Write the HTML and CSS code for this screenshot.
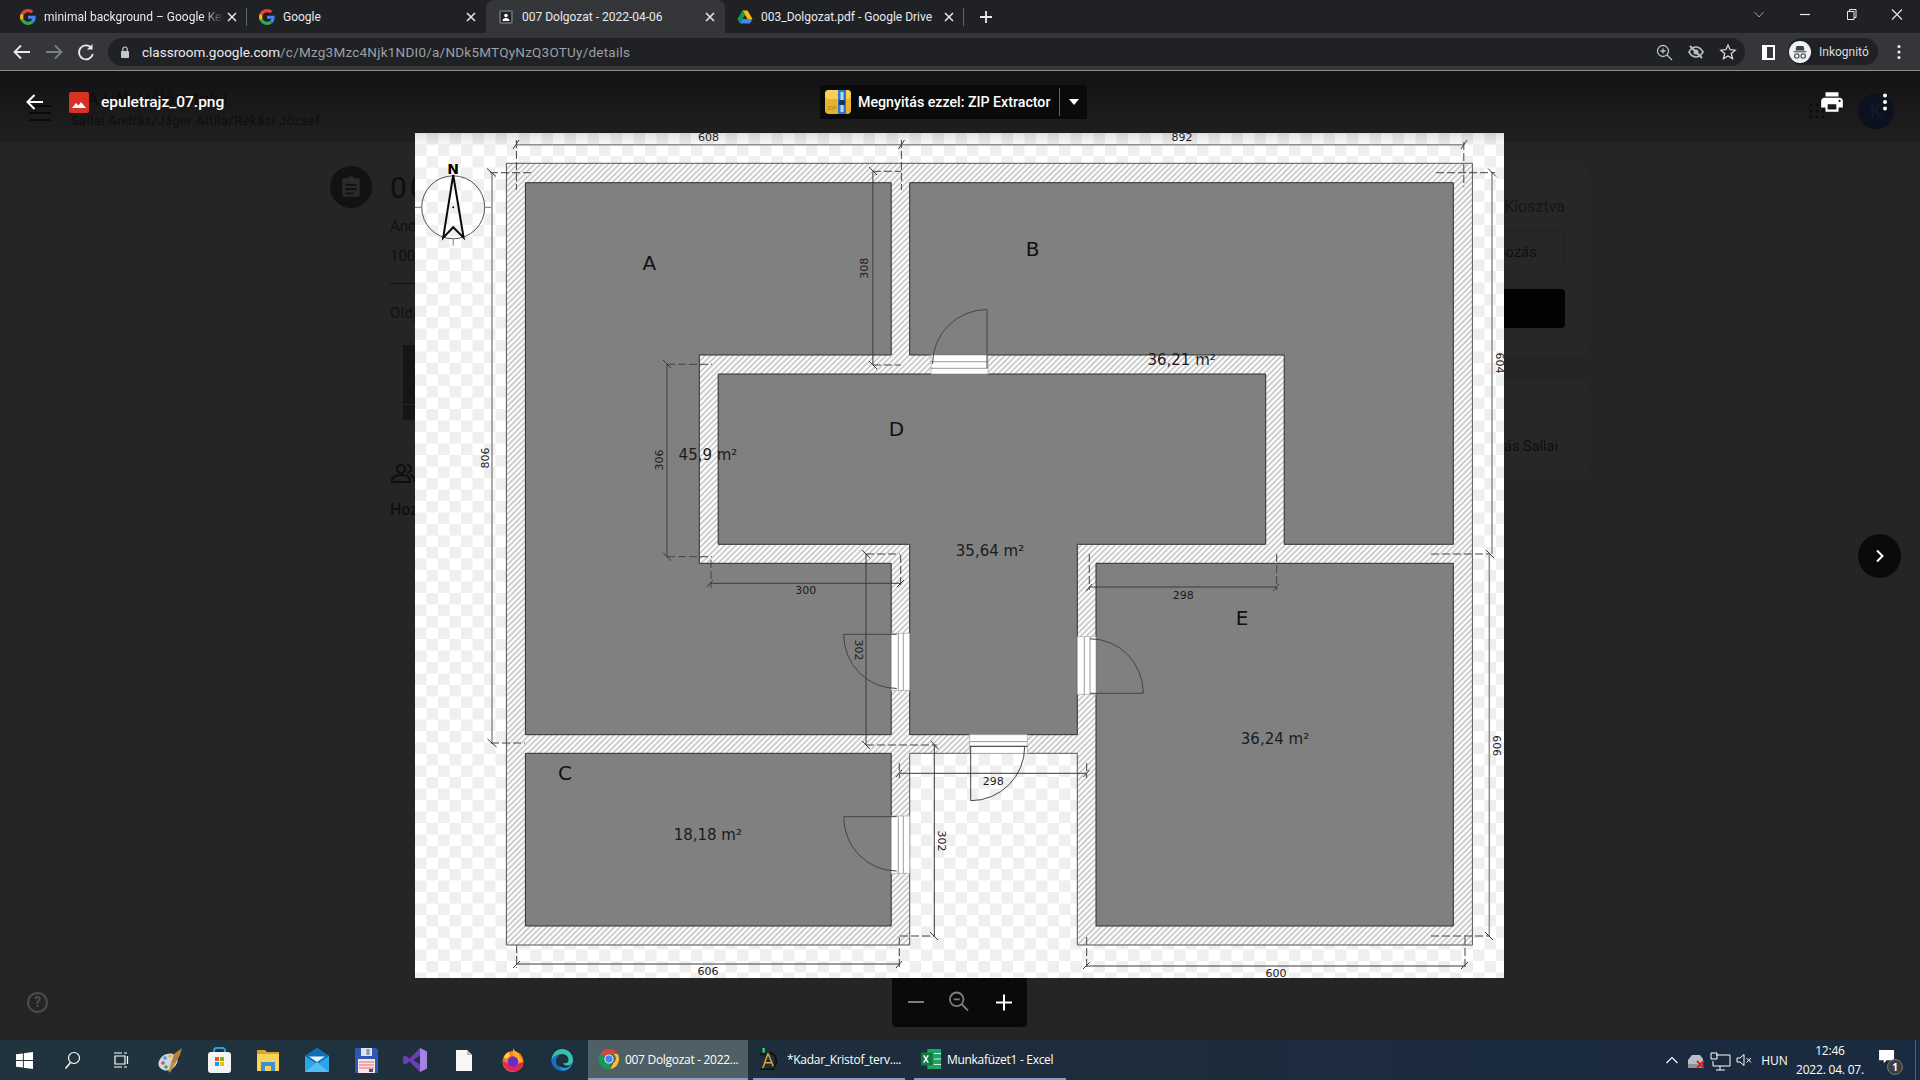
FILE: index.html
```html
<!DOCTYPE html>
<html lang="hu">
<head>
<meta charset="utf-8">
<title>epuletrajz_07.png</title>
<link rel="stylesheet" href="styles.css">
</head>
<body>
<svg class="sprites" aria-hidden="true">
  <symbol id="g-logo" viewBox="0 0 48 48">
    <path fill="#EA4335" d="M24 9.5c3.5 0 6.7 1.2 9.2 3.600l6.900-6.900C35.900 2.400 30.500 0 24 0 14.600 0 6.500 5.400 2.600 13.200l8 6.200C12.500 13.700 17.800 9.500 24 9.500z"/>
    <path fill="#4285F4" d="M47 24.500c0-1.600-.1-3.100-.4-4.500H24v9h12.900c-.6 3-2.200 5.500-4.700 7.200l7.700 6c4.500-4.200 7.100-10.300 7.100-17.700z"/>
    <path fill="#FBBC05" d="M10.600 28.600c-.5-1.400-.8-3-.8-4.600s.3-3.200.8-4.600l-8-6.200C.9 16.500 0 20.100 0 24s.9 7.500 2.600 10.800l8-6.200z"/>
    <path fill="#34A853" d="M24 48c6.500 0 11.900-2.100 15.900-5.800l-7.700-6c-2.100 1.400-4.900 2.300-8.200 2.300-6.200 0-11.500-4.200-13.400-9.900l-8 6.200C6.500 42.600 14.600 48 24 48z"/>
  </symbol>
  <symbol id="chrome-logo" viewBox="0 0 48 48">
    <path fill="#DB4437" d="M24 2a22 22 0 0 1 19 11H24a11 11 0 0 0-10.500 7.500L6.500 10A22 22 0 0 1 24 2z"/>
    <path fill="#FBC02D" d="M43 13a22 22 0 0 1-16.500 32.800L34 32a11 11 0 0 0-1-19z"/>
    <path fill="#0F9D58" d="M6.500 10l9.500 16a11 11 0 0 0 10.500 6.500l-.1 13.300A22 22 0 0 1 6.500 10z"/>
    <circle cx="24" cy="24" r="10" fill="#fff"/>
    <circle cx="24" cy="24" r="8" fill="#4285F4"/>
  </symbol>
  <symbol id="x-mark" viewBox="0 0 16 16">
    <path d="M4 4l8 8M12 4l-8 8" stroke="currentColor" stroke-width="1.500" fill="none"/>
  </symbol>
</svg>

<header class="tabstrip">
  <div class="tab tab-first tab-sep">
    <svg class="favicon"><use href="#g-logo"/></svg>
    <span class="tab-title tab-fade">minimal background – Google Keresés</span>
    <svg class="tab-close"><use href="#x-mark"/></svg>
  </div>
  <div class="tab">
    <svg class="favicon"><use href="#g-logo"/></svg>
    <span class="tab-title">Google</span>
    <svg class="tab-close"><use href="#x-mark"/></svg>
  </div>
  <div class="tab tab-active">
    <svg class="favicon" viewBox="0 0 16 16"><rect x="1" y="1" width="14" height="14" rx="2" fill="#5f6368"/><rect x="3" y="3" width="10" height="10" fill="#202124"/><circle cx="8" cy="6.500" r="1.800" fill="#fff"/><path d="M4.500 12c0-2 1.500-3 3.500-3s3.500 1 3.500 3z" fill="#fff"/></svg>
    <span class="tab-title">007 Dolgozat - 2022-04-06</span>
    <svg class="tab-close"><use href="#x-mark"/></svg>
  </div>
  <div class="tab tab-sep">
    <svg class="favicon" viewBox="0 0 16 16"><path d="M5.500 1.500h5L15.500 10h-5z" fill="#FBBC04"/><path d="M5.500 1.500L.5 10 3 14.500 8 6z" fill="#0F9D58"/><path d="M3 14.500h10L15.500 10h-10z" fill="#4285F4"/></svg>
    <span class="tab-title">003_Dolgozat.pdf - Google Drive</span>
    <svg class="tab-close"><use href="#x-mark"/></svg>
  </div>
  <svg class="newtab" viewBox="0 0 28 28"><path d="M14 8v12M8 14h12" stroke="#e8eaed" stroke-width="1.800"/></svg>
  <div class="window-controls">
    <svg class="winbtn" viewBox="0 0 46 28"><path d="M18.500 12l4.500 5 4.500-5" stroke="#9aa0a6" fill="none"/></svg>
    <svg class="winbtn" viewBox="0 0 46 28"><path d="M18 14.500h10" stroke="#e8eaed" stroke-width="1.200"/></svg>
    <svg class="winbtn" viewBox="0 0 46 28"><path d="M19.500 11.500h6.500v8h-6.500zM21.500 11.500v-2h6.500v8h-2" stroke="#e8eaed" fill="none"/></svg>
    <svg class="winbtn" viewBox="0 0 46 28"><path d="M18 9.500l10 10M28 9.500l-10 10" stroke="#e8eaed" stroke-width="1.100"/></svg>
  </div>
</header>

<nav class="toolbar">
  <svg class="tool" viewBox="0 0 32 32"><path d="M24 16H9M15 9.500L8.500 16l6.500 6.500" stroke="#e8eaed" stroke-width="1.800" fill="none"/></svg>
  <svg class="tool" viewBox="0 0 32 32"><path d="M8 16h15M17 9.500l6.500 6.500-6.500 6.500" stroke="#7c7f84" stroke-width="1.800" fill="none"/></svg>
  <svg class="tool" viewBox="0 0 32 32"><path d="M21 11.500a7 7 0 1 0 1.800 6.500" stroke="#e8eaed" stroke-width="1.800" fill="none"/><path d="M22.500 8v5.500H17z" fill="#e8eaed"/></svg>
  <div class="omnibox">
    <svg class="lock" viewBox="0 0 14 14"><rect x="3" y="6" width="8" height="7" rx="1" fill="#c4c7ca"/><path d="M4.800 6V4.200a2.200 2.200 0 0 1 4.400 0V6" stroke="#c4c7ca" stroke-width="1.200" fill="none"/></svg>
    <div class="url"><span class="url-host">classroom.google.com</span>/c/Mzg3Mzc4Njk1NDI0/a/NDk5MTQyNzQ3OTUy/details</div>
    <svg class="tool" viewBox="0 0 32 32"><circle cx="15" cy="15" r="5.500" stroke="#bdc1c6" stroke-width="1.300" fill="none"/><path d="M19 19l5 5M15 12.500v5M12.500 15h5" stroke="#bdc1c6" stroke-width="1.300"/></svg>
    <svg class="tool" viewBox="0 0 32 32"><path d="M9 16s3-5 7-5 7 5 7 5-3 5-7 5-7-5-7-5z" stroke="#bdc1c6" stroke-width="1.600" fill="none"/><circle cx="16" cy="16" r="2.500" fill="#bdc1c6"/><path d="M10 10l12 12" stroke="#bdc1c6" stroke-width="1.800"/></svg>
    <svg class="tool" viewBox="0 0 32 32"><path d="M16 9l2.100 4.700 5.100.5-3.900 3.400 1.200 5L16 20l-4.500 2.600 1.200-5-3.900-3.400 5.100-.5z" stroke="#d5d7da" stroke-width="1.300" fill="none"/></svg>
  </div>
  <svg class="tool tool-split" viewBox="0 0 32 32"><rect x="11" y="10" width="11" height="13" fill="none" stroke="#fff" stroke-width="2"/><rect x="11" y="10" width="4" height="13" fill="#fff"/></svg>
  <div class="profile-pill">
    <svg class="incognito" viewBox="0 0 22 22"><circle cx="11" cy="11" r="11" fill="#f1f3f4"/><path d="M7.500 5h7l1 4.500h-9zM4.500 10.200h13v1h-13z" fill="#3c4043"/><circle cx="7.800" cy="15" r="2.200" fill="none" stroke="#3c4043" stroke-width="1.100"/><circle cx="14.200" cy="15" r="2.200" fill="none" stroke="#3c4043" stroke-width="1.100"/></svg>
    <span class="profile-name">Inkognitó</span>
  </div>
  <svg class="tool tool-menu" viewBox="0 0 32 32"><circle cx="16" cy="10.500" r="1.600" fill="#e8eaed"/><circle cx="16" cy="16" r="1.600" fill="#e8eaed"/><circle cx="16" cy="21.500" r="1.600" fill="#e8eaed"/></svg>
</nav>

<main class="viewer">
  <div class="classroom">
    <div class="class-head">
      <div class="burger"><i></i><i></i><i></i></div>
      <div class="class-names">
        <div class="class-title">IRA I/N. Hálózatok I.</div>
        <div class="class-sub">Sallai András/Jáger Attila/Rékási József</div>
      </div>
      <svg class="apps-grid" viewBox="0 0 18 18"><g fill="#0b0b0b"><circle cx="3" cy="3" r="1.600"/><circle cx="9" cy="3" r="1.600"/><circle cx="15" cy="3" r="1.600"/><circle cx="3" cy="9" r="1.600"/><circle cx="9" cy="9" r="1.600"/><circle cx="15" cy="9" r="1.600"/><circle cx="3" cy="15" r="1.600"/><circle cx="9" cy="15" r="1.600"/><circle cx="15" cy="15" r="1.600"/></g></svg>
      <div class="avatar">K</div>
    </div>
    <div class="class-main">
      <div class="assign-icon">
        <svg viewBox="0 0 24 24" width="26" height="26"><path d="M5 4h4.200a3 3 0 0 1 5.600 0H19a1 1 0 0 1 1 1v15a1 1 0 0 1-1 1H5a1 1 0 0 1-1-1V5a1 1 0 0 1 1-1zm2 5v2h10V9zm0 4v2h10v-2zm0 4v2h7v-2z" fill="#2a2b2c"/></svg>
      </div>
      <div class="assign-body">
        <div class="assign-title">007 Dolgozat - 2022-04-06</div>
        <div class="assign-meta">András Sallai • ápr. 6.</div>
        <div class="assign-points">100 pont</div>
        <div class="assign-desc">Oldja meg a feladatot</div>
        <div class="assign-thumb"><div class="thumb-top"></div><div class="thumb-bottom"></div></div>
        <div class="assign-comments">
          <svg viewBox="0 0 24 20" width="26" height="20"><circle cx="10" cy="6" r="4" fill="none" stroke="#0e0e0e" stroke-width="2"/><path d="M1 19v-2c0-3 4-5 9-5s9 2 9 5v2zM16 2a4 4 0 0 1 0 8M19 12c3 1 5 3 5 7" fill="none" stroke="#0e0e0e" stroke-width="2"/></svg>
        </div>
        <div class="assign-add">Hozzászólás</div>
      </div>
      <aside class="assign-side">
        <section class="side-card side-work">
          <div class="status">Kiosztva</div>
          <div class="btn-outline">Létrehozás</div>
          <div class="btn-solid"></div>
        </section>
        <section class="side-card side-private">
          <div class="private-name">András Sallai</div>
        </section>
      </aside>
    </div>
  </div>

  <div class="lightbox">
    <div class="lb-head">
      <div class="lb-file">
        <svg class="lb-back" viewBox="0 0 24 24"><path d="M20 12H5M11.500 5L4.500 12l7 7" stroke="#fff" stroke-width="2" fill="none"/></svg>
        <svg class="lb-fileicon" viewBox="0 0 20 21"><rect width="20" height="21" rx="2" fill="#d93025"/><path d="M3 16l4-5 2.500 2.500L12 10l5 6z" fill="#fff"/></svg>
        <span class="lb-name">epuletrajz_07.png</span>
      </div>
      <div class="lb-open">
        <svg class="zip-icon" viewBox="0 0 26 24"><rect x="0" y="0" width="26" height="24" rx="4" fill="#e9b22e"/><rect x="0" y="0" width="26" height="9" rx="4" fill="#f6cf55"/><rect x="13" y="0" width="8" height="24" fill="#2f78c8"/><rect x="15.500" y="2" width="3" height="20" fill="#bcd6f0"/><rect x="14" y="10" width="6" height="5" rx="1" fill="#16365a"/><text class="zip-label" x="7" y="20">ZIP</text></svg>
        <span class="lb-open-text">Megnyitás ezzel: ZIP Extractor</span>
        <span class="lb-open-sep"></span>
        <span class="lb-open-arrow"></span>
      </div>
      <div class="lb-actions">
        <svg class="lb-print" viewBox="0 0 24 24"><path fill="#fff" d="M19 8H5c-1.660 0-3 1.340-3 3v6h4v4h12v-4h4v-6c0-1.660-1.340-3-3-3zm-3 11H8v-5h8v5zm3-7c-.55 0-1-.45-1-1s.45-1 1-1 1 .45 1 1-.45 1-1 1zm-1-9H6v4h12V3z"/></svg>
        <svg class="lb-more" viewBox="0 0 6 18"><circle cx="3" cy="2.500" r="2" fill="#fff"/><circle cx="3" cy="9" r="2" fill="#fff"/><circle cx="3" cy="15.500" r="2" fill="#fff"/></svg>
      </div>
    </div>

    <svg class="plan" viewBox="415 133 1089 845" width="1089" height="845">
      <defs>
        <pattern id="checker" x="415" y="133" width="23" height="23" patternUnits="userSpaceOnUse">
          <rect width="23" height="23" fill="#fff"/>
          <rect x="11.500" width="11.500" height="11.500" fill="#efefef"/>
          <rect y="11.500" width="11.500" height="11.500" fill="#efefef"/>
        </pattern>
        <pattern id="hatch" width="4" height="4" patternUnits="userSpaceOnUse" patternTransform="rotate(45)">
          <rect width="4" height="4" fill="#fff"/>
          <path d="M2 0v4" stroke="#6e6e6e" stroke-width=".7"/>
        </pattern>
        <linearGradient id="topfade" x1="0" y1="0" x2="0" y2="1">
          <stop offset="0" stop-color="#000" stop-opacity=".12"/>
          <stop offset="1" stop-color="#000" stop-opacity="0"/>
        </linearGradient>
      </defs>
      <rect x="415" y="133" width="1089" height="845" fill="url(#checker)"/>
      <rect x="415" y="133" width="1089" height="14" fill="url(#topfade)"/>

      <path class="wall" d="M506.400 163.300H1472.400V945H1077.300V753.300H909.700V945H506.400Z"/>
      <g class="room">
        <path d="M525.400 182.700H891.200V355H699.300V563.300H891.200V734.700H525.400Z"/>
        <path d="M909.700 182.700H1453.300V544.300H1284.200V355H909.700Z"/>
        <path d="M718.200 374H1265.700V544.300H1077.300V734.700H909.700V544.300H718.200Z"/>
        <path d="M525.400 753.300H891.200V926H525.400Z"/>
        <path d="M1096 563.300H1453.300V926H1096Z"/>
      </g>

      <g class="door-frame">
        <rect x="931" y="355" width="57" height="19"/>
        <rect x="891.200" y="633.300" width="18.500" height="57"/>
        <rect x="1077.300" y="636.700" width="18.700" height="57.600"/>
        <rect x="969.700" y="734.700" width="57.600" height="18.600"/>
        <rect x="891.200" y="816" width="18.500" height="57.300"/>
      </g>
      <path class="door-line" d="M931 361.700H988M931 368.300H988M898.300 633.300V690.300M903.300 633.300V690.300M1084.300 636.700V694.300M1090 636.700V694.300M969.700 741.600H1027.300M898.300 816V873.300M903.300 816V873.300"/>
      <path class="door-line door-dark" d="M969.700 746.300H1027.300"/>
      <g class="swing">
        <path d="M987 368V309.500A54.500 54.500 0 0 0 932.500 364"/>
        <path d="M896.700 634.300H843.700A53 54 0 0 0 896.700 688.500"/>
        <path d="M896.700 816.700H843.700A53 54 0 0 0 896.700 871"/>
        <path d="M1090 693.300H1143.300A53 54.500 0 0 0 1090 638.800"/>
        <path d="M970.700 746.700V800.700A54 54 0 0 0 1024.700 746.700"/>
      </g>

      <path class="ext" d="M516.400 140V190M901.400 140V190M1463.800 142V187M490 172.700H532M491 743H525M1436 172.700H1495M1431 554H1490M1431 936H1490M516.700 945V968M899.300 937V968M1086.700 937V970M1465 937V970M872.900 171.300H901M872.900 365H901M667 364.300H712M667 556.700H712M711 560V588M900.700 555V586M866 554H900M866 745H936.700M900 936H934.300M899.300 763V778M1086.700 763V778M1089.300 554V590M1276.700 554V590"/>
      <path class="dim-line dim-soft" d="M516.400 144.700H1463.800M492 172.700V743M1492 172.700V554M1489.300 554V936"/>
      <path class="dim-line" d="M516.700 964H899.300M1086.700 966H1465M872.900 171.300V365M667 364.300V556.700M710 583.300H901M866 554V745M934.300 745V936M899.300 773.300H1086.700M1089.300 587H1276.700"/>
      <path class="dim-line" d="M513 149l6-9M898.500 149l6-9M1461 149l6-9M487 168.500l9 8M487.500 739l9 8M1488 168.500l8 8M1486 550l8 8M1485 932l8 8M513 968l7-7M896 968l6-7M1083 969l7-7M1461 969l7-7M869 167l8 8M869 361l8 8M663 360l8 8M663 552.700l8 8M707 587l6-7M897 587l7-7M862 550l8 8M862 741l8 8M931 741l7 8M930 932l8 8M896 777l6-7M1083.500 777l6-7M1086 591l6-7M1273 591l6-7"/>

      <g class="compass">
        <circle cx="453.200" cy="207.300" r="31.500"/>
        <path d="M415 207.300H421.700M484.700 207.300H491.400M453.200 238.800V245.700"/>
      </g>
      <path class="north" d="M453.200 175L443.200 237.700L453.200 227.300L463.600 237.700Z"/>
      <circle class="north-dot" cx="453.200" cy="207.300" r="1"/>
      <text class="t-north" x="453.200" y="169">N</text>

      <text class="t-dim" x="708.600" y="137.500">608</text>
      <text class="t-dim" x="1182" y="137.500">892</text>
      <text class="t-dim" x="708" y="971">606</text>
      <text class="t-dim" x="1276" y="973">600</text>
      <text class="t-dim" x="805.700" y="590.500">300</text>
      <text class="t-dim" x="993.300" y="781">298</text>
      <text class="t-dim" x="1183.300" y="595">298</text>
      <text class="t-dim" transform="rotate(-90 485 458)" x="485" y="458">806</text>
      <text class="t-dim" transform="rotate(-90 864.300 268.300)" x="864.300" y="268.300">308</text>
      <text class="t-dim" transform="rotate(-90 659 460)" x="659" y="460">306</text>
      <text class="t-dim" transform="rotate(90 1499 363)" x="1499" y="363">604</text>
      <text class="t-dim" transform="rotate(90 1496.700 745.700)" x="1496.700" y="745.700">606</text>
      <text class="t-dim" transform="rotate(90 858.500 650)" x="858.500" y="650">302</text>
      <text class="t-dim" transform="rotate(90 941.700 841)" x="941.700" y="841">302</text>

      <text class="t-room" x="649.300" y="262.700">A</text>
      <text class="t-room" x="1032.500" y="248.600">B</text>
      <text class="t-room" x="565" y="772.600">C</text>
      <text class="t-room" x="896.400" y="429">D</text>
      <text class="t-room" x="1242" y="618.300">E</text>
      <text class="t-area" x="708" y="455.300">45,9 m²</text>
      <text class="t-area" x="1181.600" y="359.800">36,21 m²</text>
      <text class="t-area" x="990" y="551">35,64 m²</text>
      <text class="t-area" x="1275" y="739">36,24 m²</text>
      <text class="t-area" x="707.800" y="835">18,18 m²</text>
    </svg>

    <div class="zoombar">
      <svg class="zb" viewBox="0 0 48 49"><path d="M16 24h16" stroke="#7d7d7d" stroke-width="2"/></svg>
      <svg class="zb" viewBox="0 0 34 49"><circle cx="16.700" cy="21.300" r="6.800" stroke="#7d7d7d" stroke-width="1.800" fill="none"/><path d="M13.700 21.300h6M21.500 26l6.500 6.700" stroke="#7d7d7d" stroke-width="1.800"/></svg>
      <svg class="zb zb-plus" viewBox="0 0 46 49"><path d="M23 16.500v16M15 24.500h16" stroke="#fff" stroke-width="2"/></svg>
    </div>

    <div class="lb-next">
      <svg viewBox="0 0 14 14" width="14" height="14"><path d="M4 1.500l5.500 5.500L4 12.500" stroke="#fff" stroke-width="2" fill="none"/></svg>
    </div>
    <div class="lb-help">?</div>
  </div>
</main>

<footer class="taskbar">
  <div class="tb-icon tb-sys"><svg viewBox="0 0 18 18" width="17" height="17"><path fill="#fff" d="M0 2.500l7.300-1v7H0zM8.300 1.300L18 0v8.500H8.300zM0 9.500h7.300v7l-7.300-1zM8.300 9.500H18V18l-9.700-1.300z"/></svg></div>
  <div class="tb-icon tb-sys"><svg viewBox="0 0 20 20" width="20" height="20"><circle cx="12" cy="8" r="5.500" fill="none" stroke="#fff" stroke-width="1.200"/><path d="M8.500 12.500L3.500 18.500" stroke="#fff" stroke-width="1.400"/></svg></div>
  <div class="tb-icon tb-view"><svg viewBox="0 0 20 20" width="20" height="20"><path d="M4 6h10v8H4z" fill="none" stroke="#fff" stroke-width="1.200"/><path d="M3 3h8M13 3h3M3 17h8M13 17h3M16.500 6v8" stroke="#fff" stroke-width="1.200"/></svg></div>
  <div class="tb-icon"><svg viewBox="0 0 26 26" width="26" height="26"><ellipse cx="11" cy="15" rx="10" ry="8" transform="rotate(-30 11 15)" fill="#cfd8e0"/><circle cx="6" cy="16" r="1.800" fill="#d8504a"/><circle cx="8" cy="11" r="1.800" fill="#3c9be0"/><circle cx="13" cy="9" r="1.800" fill="#e8b930"/><circle cx="9" cy="20" r="1.800" fill="#3aa55c"/><path d="M14 16L11.500 25l1.500.5L18 17z" fill="#c98a3c"/><path d="M25 1l-8 6-3 9 4 1 5-9z" fill="#b97f3a"/></svg></div>
  <div class="tb-icon"><svg viewBox="0 0 23 26" width="23" height="26"><path d="M6 8V3.500A2.500 2.500 0 0 1 8.500 1h6A2.500 2.500 0 0 1 17 3.500V8" fill="none" stroke="#2b9fe8" stroke-width="2"/><rect x="0" y="5" width="23" height="21" rx="3" fill="#f4f4f4"/><rect x="7" y="10" width="4" height="4" fill="#f25022"/><rect x="12" y="10" width="4" height="4" fill="#7fba00"/><rect x="7" y="15" width="4" height="4" fill="#00a4ef"/><rect x="12" y="15" width="4" height="4" fill="#ffb900"/></svg></div>
  <div class="tb-icon"><svg viewBox="0 0 22 21" width="22" height="21"><path d="M0 0h8l2 2h12v19H0z" fill="#d9a32a"/><path d="M0 4h22v17H0z" fill="#f7d358"/><path d="M4 12h14v9h-4v-5H8v5H4z" fill="#3f8fd6"/></svg></div>
  <div class="tb-icon"><svg viewBox="0 0 24 24" width="24" height="24"><path d="M12 0L24 8v16H0V8z" fill="#2aa5ea"/><path d="M12 0L24 8l-12 8L0 8z" fill="#0d6fb8"/><path d="M4 8.500h16L12 14z" fill="#eef7fd"/><path d="M0 24l12-10 12 10z" fill="#56bdf3"/></svg></div>
  <div class="tb-icon"><svg viewBox="0 0 23 25" width="23" height="25"><path d="M0 0h21l2 2v23H0z" fill="#2f57b8"/><rect x="6" y="0" width="11" height="8" fill="#dfe3ea"/><rect x="11.500" y="1" width="3" height="6" fill="#8a93a3"/><rect x="3" y="11" width="17" height="14" fill="#f9e4e4"/><path d="M4 14h15M4 17h15M4 20h15" stroke="#e46a72" stroke-width="1.200"/><rect x="14" y="21" width="4" height="3" fill="#555"/></svg></div>
  <div class="tb-icon"><svg viewBox="0 0 24 24" width="24" height="24"><path d="M17 0l7 3.500v17L17 24z" fill="#a583e0"/><path d="M17 0L6.500 10.500 2.500 7.500 0 8.700v6.600l2.500 1.200 4-3L17 24v-7.500L10.500 12 17 7.500z" fill="#6a3db5"/></svg></div>
  <div class="tb-icon"><svg viewBox="0 0 16 21" width="16" height="21"><path d="M0 0h11l5 5v16H0z" fill="#f7f7f7"/><path d="M11 0l5 5h-5z" fill="#bdbdbd"/></svg></div>
  <div class="tb-icon"><svg viewBox="0 0 24 24" width="24" height="24"><circle cx="12" cy="13.500" r="10.500" fill="#ff7a1a"/><path d="M12 0c1 3 4 4 6 7s4 6 4 7H12z" fill="#ffb01f"/><path d="M2 13c0 5 4 10.500 10 10.500S22 19 22 14L12 18z" fill="#e0245e"/><circle cx="12" cy="13.500" r="5.200" fill="#6a2cc9"/><path d="M3 9c1.500-3 3-4 5-5l1 4-4 3z" fill="#ffd23f"/></svg></div>
  <div class="tb-icon"><svg viewBox="0 0 24 24" width="24" height="24"><path d="M12 1a11 11 0 0 1 11 12c0 3-3 4.500-5.500 4.500-3 0-4.500-1.500-4.500-2.500 3 1 5.500-.5 5.500-3C18.500 8 15 6 12 6c-4.500 0-8 3-10.500 7A11 11 0 0 1 12 1z" fill="#35c1b0"/><path d="M1.500 13C2 9 6 6.500 9.500 7.500 6 9 5 13 7 17c1.500 3 4.500 5 8.500 5.500A11 11 0 0 1 1.500 13z" fill="#1a6fc4"/><path d="M15 22.500c-2.500.5-5.500-2-6.500-5 2.500 2.500 7 3 10 1.500 1.800-1 3.500-3 4-5-.5 4.500-3.500 7.500-7.500 8.500z" fill="#2a98dc"/></svg></div>
  <div class="task task-active">
    <svg class="task-logo"><use href="#chrome-logo"/></svg>
    <span class="task-text">007 Dolgozat - 2022...</span>
  </div>
  <div class="task task-cad">
    <svg class="task-logo" viewBox="0 0 24 26"><rect x="6" y="1" width="2.500" height="5" fill="#2de04a"/><path d="M12 7L6 24M12 7l7 17M9 17h7" stroke="#d9a441" stroke-width="1.600" fill="none"/><path d="M3 8h7M3 24h17" stroke="#111" stroke-width="2"/><path d="M14 6a9 9 0 0 1 7 9 9 9 0 0 1-4 8" stroke="#0d0d0d" stroke-width="2" fill="none"/></svg>
    <span class="task-text">*Kadar_Kristof_terv....</span>
  </div>
  <div class="task task-xl">
    <svg class="task-logo" viewBox="0 0 24 24"><rect x="8" y="1" width="15" height="22" rx="1" fill="#21a366"/><path d="M15 6h8M15 12h8M15 18h8" stroke="#e7f6ee"/><rect x="1" y="5" width="13" height="14" rx="1" fill="#107c41"/><path d="M4 8l5 8M9 8l-5 8" stroke="#fff" stroke-width="1.600"/></svg>
    <span class="task-text">Munkafüzet1 - Excel</span>
  </div>

  <div class="tray">
    <svg class="tray-ico" viewBox="0 0 24 40"><path d="M6.500 23l5.500-5.500 5.500 5.500" stroke="#fff" stroke-width="1.100" fill="none"/></svg>
    <svg class="tray-ico" viewBox="0 0 24 40"><path d="M4 20l4-5h8l3 4v7H4z" fill="#b9bcc0"/><rect x="4" y="24" width="15" height="4" fill="#8f9398"/><path d="M13 21l7 7M20 21l-7 7" stroke="#e8161c" stroke-width="2"/></svg>
    <svg class="tray-ico" viewBox="0 0 24 40"><path d="M8 15h14v11H5v-5M12 26v4M8 30h9M3 13h6v6H3z" stroke="#fff" fill="none"/></svg>
    <svg class="tray-ico" viewBox="0 0 24 40"><path d="M5 18h3l4-3.500v11L8 22H5z" stroke="#fff" fill="none"/><path d="M14.500 18l4.500 4.500M19 18l-4.500 4.500" stroke="#fff"/></svg>
    <div class="tray-lang">HUN</div>
    <div class="tray-clock"><div>12:46</div><div>2022. 04. 07.</div></div>
    <div class="tray-notif">
      <svg viewBox="0 0 18 16" width="17" height="15"><path d="M0 0h16v11H8l-3 3v-3H0z" fill="#fff"/></svg>
      <span class="notif-badge">1</span>
    </div>
    <div class="show-desktop"></div>
  </div>
</footer>
</body>
</html>
```

FILE: styles.css
```css
* { box-sizing: border-box; }
html, body { height: 100%; }
body {
  margin: 0;
  width: 1920px;
  height: 1080px;
  overflow: hidden;
  display: flex;
  flex-direction: column;
  background: #252525;
  font-family: Roboto, "Noto Sans", sans-serif;
  color: #e8eaed;
}
.sprites { position: absolute; width: 0; height: 0; }

/* Browser tab strip */
.tabstrip {
  flex: 0 0 33px;
  display: flex;
  align-items: stretch;
  background: #202124;
}
.tab {
  flex: 0 0 239px;
  min-width: 0;
  display: flex;
  align-items: center;
  padding: 0 7px 0 12px;
  font-size: 12px;
  position: relative;
}
.tab-first { margin-left: 8px; }
.tab-active { background: #35363a; border-radius: 8px 8px 0 0; }
.tab-sep::after {
  content: "";
  position: absolute;
  right: 0;
  top: 8px;
  bottom: 7px;
  width: 1px;
  background: #5f6368;
}
.favicon { flex: 0 0 16px; width: 16px; height: 16px; margin-right: 8px; }
.tab-title { flex: 1; min-width: 0; white-space: nowrap; overflow: hidden; }
.tab-fade { -webkit-mask-image: linear-gradient(90deg, #000 88%, transparent); mask-image: linear-gradient(90deg, #000 88%, transparent); }
.tab-close { flex: 0 0 16px; width: 16px; height: 16px; color: #e8eaed; }
.newtab { flex: 0 0 28px; width: 28px; height: 28px; margin: 3px 0 0 8px; }
.window-controls { margin-left: auto; display: flex; }
.winbtn { width: 46px; height: 28px; }

/* Browser toolbar */
.toolbar {
  flex: 0 0 38px;
  display: flex;
  align-items: center;
  padding: 0 5px 0 6px;
  background: #35363a;
  border-bottom: 1px solid #8c8d90;
}
.tool { flex: 0 0 32px; width: 32px; height: 32px; }
.omnibox {
  flex: 0 0 1637px;
  height: 28px;
  margin-left: 6px;
  padding: 0 1px 0 10px;
  display: flex;
  align-items: center;
  background: #202124;
  border-radius: 14px;
}
.lock { flex: 0 0 14px; width: 14px; height: 14px; }
.url { flex: 1; margin-left: 10px; font-size: 13.500px; letter-spacing: .23px; color: #9aa0a6; white-space: nowrap; }
.url-host { color: #e8eaed; letter-spacing: 0; }
.tool-split { margin-left: 7px; }
.profile-pill {
  flex: 0 0 90px;
  height: 27px;
  margin-left: 4px;
  display: flex;
  align-items: center;
  background: #202124;
  border-radius: 14px;
}
.incognito { width: 22px; height: 22px; margin-left: 1px; }
.profile-name { margin-left: 8px; font-size: 12px; color: #dadce0; }
.tool-menu { margin-left: 5px; }

/* Page under the lightbox */
.viewer { flex: 1; position: relative; overflow: hidden; background: #252525; }
.classroom { height: 100%; display: flex; flex-direction: column; }
.class-head {
  flex: 0 0 71px;
  display: flex;
  align-items: center;
  background: linear-gradient(#121212, #202020);
  border-bottom: 1px solid #1f1f1f;
  padding-left: 29px;
}
.burger { width: 22px; display: flex; flex-direction: column; gap: 5px; margin-top: 14px; }
.burger i { display: block; height: 2px; background: #0b0b0b; }
.class-names { margin: 5px 0 0 20px; }
.class-title { font-size: 18px; line-height: 24px; color: #0d0d0d; }
.class-sub { font-size: 13px; line-height: 20px; color: #0d0d0d; letter-spacing: .4px; }
.apps-grid { width: 18px; height: 18px; margin: 10px 0 0 auto; }
.avatar {
  width: 36px;
  height: 36px;
  margin: 10px 26px 0 32px;
  border-radius: 50%;
  background: #0c1120;
  color: #151a2a;
  font-size: 20px;
  line-height: 36px;
  text-align: center;
}
.class-main { flex: 1; display: flex; padding: 24px 0 0 330px; }
.assign-icon {
  flex: 0 0 42px;
  height: 42px;
  margin-right: 18px;
  border-radius: 50%;
  background: #111213;
  display: flex;
  align-items: center;
  justify-content: center;
}
.assign-body { flex: 0 0 900px; color: #0e0e0e; }
.assign-title { height: 44px; font-size: 30px; line-height: 44px; letter-spacing: 3px; white-space: nowrap; }
.assign-meta { height: 28px; margin-top: 2px; font-size: 15px; line-height: 28px; color: #111; }
.assign-points {
  height: 44px;
  padding-top: 2px;
  font-size: 15px;
  line-height: 28px;
  border-bottom: 1px solid #111;
}
.assign-desc { height: 58px; font-size: 15px; line-height: 58px; letter-spacing: .3px; color: #111; }
.assign-thumb {
  height: 78px;
  margin-bottom: 19px;
  padding: 2px 0 0 12px;
  border: 1px solid #222;
  border-radius: 8px;
}
.thumb-top { height: 59px; background: #161616; }
.thumb-bottom { height: 15px; margin-top: 1px; background: #161616; }
.assign-comments { height: 48px; padding-top: 23px; border-top: 1px solid #222; }
.assign-add { font-size: 16px; font-weight: 500; margin-top: 12px; line-height: 22px; }
.assign-side {
  margin-left: auto;
  flex: 0 0 290px;
  min-width: 0;
  margin-right: 330px;
  display: flex;
  flex-direction: column;
  gap: 26px;
  margin-top: 1px;
}
.side-card {
  background: #272727;
  border-radius: 8px;
  padding: 0 25px;
  color: #0f0f0f;
  font-size: 14px;
}
.side-work { height: 188px; padding-top: 30px; }
.status { text-align: right; color: #0f1a12; font-size: 16px; line-height: 20px; }
.btn-outline {
  height: 40px;
  margin-top: 14px;
  padding-right: 27px;
  border: 1px solid #222;
  border-radius: 4px;
  line-height: 40px;
  text-align: right;
  white-space: nowrap;
  font-size: 15px;
}
.btn-solid { height: 39px; margin-top: 18px; background: #020202; border-radius: 4px; }
.side-private { height: 93px; padding-top: 55px; }
.private-name { text-align: right; font-size: 14.500px; line-height: 22px; margin-right: 7px; white-space: nowrap; }

/* Lightbox over the page */
.lightbox {
  position: absolute;
  inset: 0;
  display: flex;
  flex-direction: column;
  align-items: flex-start;
}
.lb-head {
  flex: 0 0 62px;
  width: 100%;
  display: grid;
  grid-template-columns: 820px 267px 1fr;
  align-items: center;
}
.lb-file { display: flex; align-items: center; padding-left: 23px; }
.lb-back { width: 24px; height: 24px; }
.lb-fileicon { width: 20px; height: 21px; margin-left: 22px; }
.lb-name { margin-left: 12px; font-size: 15.500px; font-weight: 500; color: #fff; }
.lb-open {
  height: 34px;
  display: flex;
  align-items: center;
  background: #0a0a0a;
  padding-left: 5px;
}
.zip-icon { width: 26px; height: 24px; }
.zip-label { font: 700 6px Roboto, sans-serif; fill: #c08f1c; text-anchor: middle; }
.lb-open-text { margin-left: 7px; width: 192px; font-size: 14.200px; font-weight: 500; color: #fff; white-space: nowrap; }
.lb-open-sep { width: 1px; height: 28px; margin-left: 9px; background: #5f6368; }
.lb-open-arrow {
  margin-left: 9px;
  border-left: 5px solid transparent;
  border-right: 5px solid transparent;
  border-top: 6px solid #fff;
}
.lb-actions { display: flex; align-items: center; padding-left: 732px; }
.lb-print { width: 26px; height: 26px; }
.lb-more { width: 6px; height: 18px; margin-left: 37px; }
.plan { display: block; flex: 0 0 845px; margin-left: 415px; }
.zoombar {
  margin-left: 892px;
  width: 135px;
  height: 49px;
  display: grid;
  grid-template-columns: 48px 34px 53px;
  background: #0a0a0a;
  border-radius: 0 0 4px 4px;
}
.zb { display: block; width: 100%; height: 49px; }
.zb-plus { padding-left: 7px; }
.lb-next {
  position: absolute;
  left: 1858px;
  top: 463px;
  width: 43px;
  height: 44px;
  border-radius: 50%;
  background: #0a0a0a;
  display: flex;
  align-items: center;
  justify-content: center;
}
.lb-help {
  position: absolute;
  left: 27px;
  top: 921px;
  width: 21px;
  height: 21px;
  border: 2px solid #4d4d4d;
  border-radius: 50%;
  color: #4d4d4d;
  font-size: 14px;
  font-weight: 700;
  line-height: 17px;
  text-align: center;
}

/* Floor plan drawing */
.wall { fill: url(#hatch); stroke: #555; stroke-width: 1; }
.room path { fill: #808080; stroke: #2e2e2e; stroke-width: 1; }
.door-frame rect { fill: #fff; stroke: #b0b0b0; stroke-width: .8; }
.door-line { stroke: #9a9a9a; stroke-width: 1; fill: none; }
.door-dark { stroke: #222; }
.swing path { fill: none; stroke: #444; stroke-width: 1; }
.ext { stroke: #444; stroke-width: 1; stroke-dasharray: 8 3; fill: none; }
.dim-line { stroke: #3a3a3a; stroke-width: 1; fill: none; }
.dim-soft { stroke: #8f8f8f; stroke-width: 1.500; }
.compass circle { fill: none; stroke: #555; stroke-width: 1; }
.compass path { stroke: #777; stroke-width: 1; fill: none; }
.north { fill: none; stroke: #0a0a0a; stroke-width: 2; }
.north-dot { fill: #111; }
.t-north, .t-dim, .t-room, .t-area {
  font-family: "DejaVu Sans", sans-serif;
  text-anchor: middle;
  dominant-baseline: central;
  fill: #1b1b1b;
}
.t-north { font-size: 14px; font-weight: 700; fill: #000; }
.t-dim { font-size: 11px; }
.t-room { font-size: 20px; fill: #101010; }
.t-area { font-size: 15px; }

/* Windows taskbar */
.taskbar {
  flex: 0 0 40px;
  display: flex;
  align-items: stretch;
  background: linear-gradient(90deg, #20343e, #1e2d3b 45%, #1a2a40);
  font-family: "Open Sans", Roboto, sans-serif;
  font-size: 12px;
  color: #fff;
}
.tb-icon { flex: 0 0 49px; display: flex; align-items: center; justify-content: center; }
.tb-sys { flex-basis: 48px; }
.tb-view { flex-basis: 49.500px; }
.task {
  display: flex;
  align-items: center;
  border-bottom: 2px solid #86a0c4;
  white-space: nowrap;
  letter-spacing: -.3px;
}
.task-active { flex: 0 0 160px; background: #4f5f66; padding-left: 10px; margin-left: 1.500px; }
.task-cad { flex: 0 0 152px; margin-left: 5px; padding-left: 4px; }
.task-cad .task-logo { margin-right: 8px; }
.task-xl { flex: 0 0 152px; margin-left: 9px; padding-left: 6px; }
.task-logo { flex: 0 0 22px; width: 22px; height: 24px; margin-right: 5px; }
.tray { margin-left: auto; display: flex; align-items: center; height: 40px; }
.tray-ico { flex: 0 0 24px; width: 24px; height: 40px; }
.tray-lang { flex: 0 0 37px; text-align: center; font-size: 12px; }
.tray-clock { flex: 0 0 74px; text-align: center; font-size: 12px; line-height: 19px; letter-spacing: -.2px; }
.tray-notif { flex: 0 0 40px; height: 40px; position: relative; display: flex; align-items: center; justify-content: center; padding-bottom: 5px; }
.notif-badge {
  position: absolute;
  left: 20px;
  top: 19px;
  width: 16px;
  height: 16px;
  border-radius: 50%;
  background: #3c4043;
  border: 1px solid #777;
  font-size: 10px;
  font-weight: 700;
  line-height: 14px;
  text-align: center;
}
.show-desktop { flex: 0 0 13px; height: 40px; position: relative; }
.show-desktop::after { content: ""; position: absolute; left: 8px; top: 0; bottom: 0; width: 1px; background: #56606c; }
```
